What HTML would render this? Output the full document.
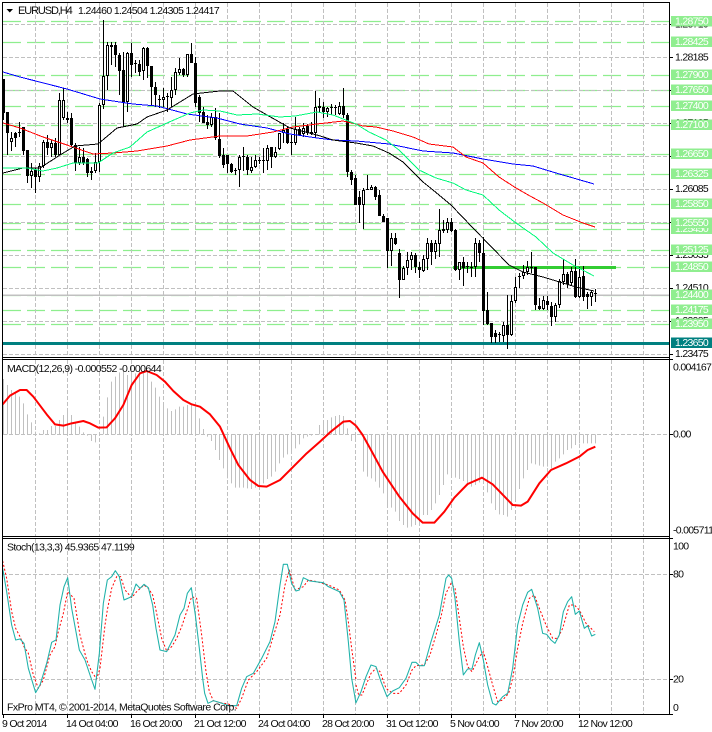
<!DOCTYPE html>
<html><head><meta charset="utf-8"><title>EURUSD H4</title>
<style>
html,body{margin:0;padding:0;background:#fff;width:712px;height:732px;overflow:hidden}
svg{display:block}
text{font-family:"Liberation Sans",sans-serif;font-size:10.5px;fill:#0a0a0a;letter-spacing:-.7px}
.l text{fill:#fff}
</style></head><body>
<svg width="712" height="732" viewBox="0 0 712 732" xmlns="http://www.w3.org/2000/svg">
<rect width="712" height="732" fill="#fff"/>

<!-- green level lines -->
<path fill="none" stroke="#8eee8e" stroke-width="1.25" stroke-dasharray="18 6" d="M3 21.5H669M3 42.5H669M3 75.5H669M3 90.5H669M3 106.5H669M3 125.5H669M3 154.5H669M3 174.5H669M3 204.5H669M3 223.5H669M3 229.5H669M3 250.5H669M3 267.5H669M3 295.5H669M3 310.5H669M3 324.5H669"/>

<!-- grid -->
<path shape-rendering="crispEdges" fill="none" stroke="#c0c0c0" stroke-dasharray="4 2" d="M3 24.5H669M3 57.5H669M3 90.5H669M3 123.5H669M3 156.5H669M3 189.5H669M3 222.5H669M3 255.5H669M3 288.5H669M3 321.5H669M3 354.5H669
M35.5 3V357M67.5 3V357M99.5 3V357M131.5 3V357M163.5 3V357M195.5 3V357M227.5 3V357M259.5 3V357M291.5 3V357M323.5 3V357M355.5 3V357M387.5 3V357M419.5 3V357M451.5 3V357M483.5 3V357M515.5 3V357M547.5 3V357M579.5 3V357M611.5 3V357M643.5 3V357
M35.5 360V536M67.5 360V536M99.5 360V536M131.5 360V536M163.5 360V536M195.5 360V536M227.5 360V536M259.5 360V536M291.5 360V536M323.5 360V536M355.5 360V536M387.5 360V536M419.5 360V536M451.5 360V536M483.5 360V536M515.5 360V536M547.5 360V536M579.5 360V536M611.5 360V536M643.5 360V536
M3 434.5H669
M35.5 539V714M67.5 539V714M99.5 539V714M131.5 539V714M163.5 539V714M195.5 539V714M227.5 539V714M259.5 539V714M291.5 539V714M323.5 539V714M355.5 539V714M387.5 539V714M419.5 539V714M451.5 539V714M483.5 539V714M515.5 539V714M547.5 539V714M579.5 539V714M611.5 539V714M643.5 539V714
M3 574.5H669M3 679.5H669"/>

<!-- bid line, teal level, thick green level -->
<rect x="3" y="294.5" width="666" height="1.5" fill="#c0c0c0"/>
<rect x="3" y="342" width="666" height="3" fill="#008080"/>
<rect x="453" y="266" width="163" height="3" fill="#32cd32"/>

<!-- candles -->
<path shape-rendering="crispEdges" fill="none" stroke="#000" d="M3.5 79V120M7.5 112V155M11.5 132V151M15.5 132V147M19.5 122V137M23.5 127V155M27.5 150V183M31.5 163V188M35.5 168V193M39.5 163V182M43.5 140V168M47.5 135V155M51.5 140V157M55.5 138V157M59.5 93V155M63.5 88V120M67.5 112V123M71.5 113V147M75.5 143V171M79.5 147V165M83.5 148V165M87.5 158V177M91.5 167V180M95.5 153V173M99.5 103V172M103.5 20V109M107.5 42V90M111.5 42V65M115.5 42V67M119.5 53V95M123.5 52V127M127.5 52V112M131.5 43V77M135.5 60V73M139.5 60V76M143.5 47V80M147.5 47V78M151.5 66V105M155.5 82V107M159.5 95V108M163.5 88V107M167.5 93V112M171.5 77V107M175.5 68V95M179.5 58V75M183.5 68V77M187.5 54V77M191.5 43V63M195.5 57V107M199.5 95V122M203.5 107V123M207.5 115V129M211.5 113V127M215.5 108V140M219.5 113V158M223.5 148V168M227.5 155V173M231.5 163V173M235.5 168V175M239.5 155V187M243.5 147V171M247.5 155V175M251.5 157V173M255.5 155V168M259.5 157V164M263.5 148V173M267.5 145V170M271.5 147V168M275.5 147V158M279.5 133V150M283.5 123V143M287.5 127V144M291.5 135V155M295.5 117V145M299.5 127V136M303.5 123V137M307.5 124V135M311.5 122V135M315.5 91V138M319.5 98V113M323.5 102V118M327.5 107V117M331.5 104V115M335.5 105V115M339.5 102V115M343.5 88V118M347.5 113V177M351.5 170V185M355.5 175V205M359.5 191V223M363.5 188V229M367.5 175V190M371.5 185V190M375.5 186V200M379.5 190V216M383.5 214V222M387.5 218V268M391.5 233V266M395.5 233V245M399.5 249V298M403.5 266V280M407.5 252V275M411.5 252V270M415.5 253V273M419.5 262V278M423.5 255V272M427.5 238V270M431.5 240V265M435.5 240V259M439.5 209V257M443.5 220V233M447.5 218V233M451.5 218V232M455.5 229V271M459.5 262V280M463.5 257V286M467.5 262V273M471.5 262V277M475.5 238V277M479.5 240V262M483.5 237V325M487.5 292V325M491.5 323V343M495.5 330V343M499.5 332V342M503.5 322V342M507.5 295V349M511.5 295V336M515.5 277V303M519.5 273V288M523.5 265V279M527.5 261V275M531.5 252V273M535.5 267V310M539.5 298V310M543.5 296V310M547.5 296V310M551.5 302V326M555.5 303V322M559.5 279V308M563.5 259V285M567.5 272V288M571.5 267V285M575.5 259V298M579.5 267V298M583.5 266V301M587.5 292V309M591.5 290V306M595.5 289V302"/>
<path shape-rendering="crispEdges" fill="none" stroke="#000" stroke-width="3" d="M3.5 79V113M7.5 112V133M11.5 138V142M15.5 133V138M19.5 132V133M23.5 127V151M27.5 150V176M31.5 171V176M35.5 170V177M39.5 166V177M43.5 142V166M47.5 142V148M51.5 143V148M55.5 143V155M59.5 100V155M63.5 100V118M67.5 118V120M71.5 118V145M75.5 145V163M79.5 157V163M83.5 157V163M87.5 159V173M91.5 171V173M95.5 162V171M99.5 105V162M103.5 76V105M107.5 45V76M111.5 45V47M115.5 45V55M119.5 55V71M123.5 70V102M127.5 53V102M131.5 53V65M135.5 63V64M139.5 64V72M143.5 48V71M147.5 48V66M151.5 66V87M155.5 87V95M159.5 99V100M163.5 97V100M167.5 96V97M171.5 90V98M175.5 72V90M179.5 69V73M183.5 69V75M187.5 54V75M191.5 54V63M195.5 63V103M199.5 97V113M203.5 112V123M207.5 122V125M211.5 117V125M215.5 117V138M219.5 139V156M223.5 155V165M227.5 155V164M231.5 164V172M235.5 170V171M239.5 157V170M243.5 156V157M247.5 157V170M251.5 167V171M255.5 160V167M259.5 160V161M263.5 160V161M267.5 148V161M271.5 147V157M275.5 152V157M279.5 133V149M283.5 130V133M287.5 129V143M291.5 142V143M295.5 129V143M299.5 129V135M303.5 128V134M307.5 126V133M311.5 132V134M315.5 107V133M319.5 106V108M323.5 107V112M327.5 108V112M331.5 107V108M335.5 107V108M339.5 106V114M343.5 106V115M347.5 115V172M351.5 172V180M355.5 178V205M359.5 197V205M363.5 190V205M367.5 189V190M371.5 187V190M375.5 187V197M379.5 195V216M383.5 216V222M387.5 218V251M391.5 238V251M395.5 238V244M399.5 253V280M403.5 268V280M407.5 260V268M411.5 255V260M415.5 255V267M419.5 267V270M423.5 259V271M427.5 243V259M431.5 243V252M435.5 243V252M439.5 230V244M443.5 229V231M447.5 222V230M451.5 222V231M455.5 230V270M459.5 262V270M463.5 262V268M467.5 266V267M471.5 267V268M475.5 243V267M479.5 243V253M483.5 253V311M487.5 310V324M491.5 323V337M495.5 333V337M499.5 334V335M503.5 325V336M507.5 325V335M511.5 301V335M515.5 287V301M519.5 276V277M523.5 272V276M527.5 267V272M531.5 267V268M535.5 267V305M539.5 306V309M543.5 300V309M547.5 301V305M551.5 306V317M555.5 305V317M559.5 281V305M563.5 274V282M567.5 274V284M571.5 271V283M575.5 271V297M579.5 277V297M583.5 276V297M587.5 294V297M591.5 292V297M595.5 293V294"/>
<path shape-rendering="crispEdges" fill="none" stroke="#fff" d="M11.5 139V141M31.5 172V175M39.5 167V176M43.5 143V165M51.5 144V147M59.5 101V154M63.5 101V117M79.5 158V162M95.5 163V170M99.5 106V161M103.5 77V104M107.5 46V75M127.5 54V101M143.5 49V70M163.5 98V99M171.5 91V97M175.5 73V89M179.5 70V72M187.5 55V74M211.5 118V124M239.5 158V169M251.5 168V170M255.5 161V166M267.5 149V160M275.5 153V156M279.5 134V148M283.5 131V132M295.5 130V142M303.5 129V133M315.5 108V132M327.5 109V111M339.5 107V113M363.5 191V204M371.5 188V189M391.5 239V250M403.5 269V279M407.5 261V267M411.5 256V259M423.5 260V270M427.5 244V258M435.5 244V251M439.5 231V243M447.5 223V229M459.5 263V269M475.5 244V266M503.5 326V335M511.5 302V334M515.5 288V300M523.5 273V275M527.5 268V271M543.5 301V308M555.5 306V316M559.5 282V304M563.5 275V281M571.5 272V282M579.5 278V296M591.5 293V296"/>

<!-- moving averages -->
<g fill="none" stroke-linejoin="round" shape-rendering="crispEdges">
<polyline stroke="#0000ff" stroke-width="1" points="3,72 20,77 67,89 100,99 133,104 157,106 187,114 217,118 240,124 267,128 290,134 317,138 333,140 356,141 389,144 423,151 453,153 483,159 513,164 533,166 556,173 594,184"/>
<polyline stroke="#ff0000" stroke-width="1" points="3,123 20,128 43,137 67,145 93,154 113,153 137,151 167,146 190,140 220,136 247,136 273,132 293,127 317,124 343,121 356,124 363,126 376,127 393,131 413,137 429,144 453,147 466,157 483,163 499,177 516,188 530,196 543,203 563,215 583,223 595,227"/>
<polyline stroke="#000000" stroke-width="1" points="3,173 23,168 40,168 60,155 75,146 98,144 117,128 137,124 147,117 167,110 193,94 220,91 233,91 253,107 267,115 290,128 317,135 333,140 356,143 373,146 389,153 403,162 423,182 433,190 451,205 473,228 509,265 523,272 543,277 563,283 576,287 594,291"/>
<polyline stroke="#00fa7a" stroke-width="1" points="3,168 27,168 43,171 57,168 73,163 98,163 113,153 130,147 147,132 167,123 190,113 203,110 220,111 237,115 257,114 280,117 295,116 317,112 333,115 356,124 369,132 386,140 399,150 419,170 436,178 453,183 466,190 483,195 499,210 516,223 536,237 553,253 573,265 594,276"/>
</g>

<!-- MACD histogram -->
<g transform="translate(0,355) scale(.33333)" fill="none" stroke="#c0c0c0" stroke-width="3">
<path d="M10.5 238V72M22.5 238V90M34.5 238V105M46.5 238V110M58.5 238V125M70.5 238V145M82.5 238V178M94.5 238V202M106.5 238V230M118.5 238V235M130.5 238V225M142.5 238V225M154.5 238V213M166.5 238V213M178.5 238V195M190.5 238V180M202.5 238V165M214.5 238V180M226.5 238V205M238.5 238V215M250.5 238V232M262.5 238V242M274.5 238V258M286.5 238V262M298.5 238V240M310.5 238V185M322.5 238V127M334.5 238V80M346.5 238V65M358.5 238V52M370.5 238V50M382.5 238V60M394.5 238V60M406.5 238V55M418.5 238V48M430.5 238V48M442.5 238V50M454.5 238V80M466.5 238V98M478.5 238V125M490.5 238V145M502.5 238V160M514.5 238V168M526.5 238V163M538.5 238V155M550.5 238V155M562.5 238V150M574.5 238V150M586.5 238V155M598.5 238V190M610.5 238V222M622.5 238V245M634.5 238V258M646.5 238V285M658.5 238V315M670.5 238V340M682.5 238V370M694.5 238V385M706.5 238V398M718.5 238V398M730.5 238V398M742.5 238V400M754.5 238V402M766.5 238V398M778.5 238V395M790.5 238V385M802.5 238V372M814.5 238V365M826.5 238V350M838.5 238V325M850.5 238V308M862.5 238V298M874.5 238V285M886.5 238V280M898.5 238V268M910.5 238V250M922.5 238V245M934.5 238V242M958.5 238V210M970.5 238V205M982.5 238V195M994.5 238V187M1006.5 238V183M1018.5 238V180M1030.5 238V183M1042.5 238V220M1054.5 238V258M1066.5 238V260"/>
</g>
<g transform="translate(356,355) scale(.33333)" fill="none" stroke="#c0c0c0" stroke-width="3">
<path d="M10.5 238V240M22.5 238V350M34.5 238V365M46.5 238V370M58.5 238V380M70.5 238V398M82.5 238V415M94.5 238V450M106.5 238V458M118.5 238V470M130.5 238V498M142.5 238V510M154.5 238V518M166.5 238V515M178.5 238V510M190.5 238V505M202.5 238V480M214.5 238V480M226.5 238V465M238.5 238V445M250.5 238V420M262.5 238V390M274.5 238V358M286.5 238V368M298.5 238V368M310.5 238V372M322.5 238V378M334.5 238V385M346.5 238V395M358.5 238V390M370.5 238V382M382.5 238V385M394.5 238V412M406.5 238V445M418.5 238V465M430.5 238V478M442.5 238V480M454.5 238V485M466.5 238V465M478.5 238V430M490.5 238V402M502.5 238V370M514.5 238V345M526.5 238V325M538.5 238V328M550.5 238V332M562.5 238V335M574.5 238V335M586.5 238V340M598.5 238V320M610.5 238V310M622.5 238V298M634.5 238V285M646.5 238V280M658.5 238V270M670.5 238V265M682.5 238V265M694.5 238V265M706.5 238V265M718.5 238V265"/>
</g>
<!-- MACD signal -->
<g transform="translate(0,355) scale(.33333)" fill="none" stroke="#ff0000" stroke-width="6" stroke-linejoin="round">
<polyline points="8,148 30,122 60,105 80,105 100,125 140,178 165,208 190,212 215,205 250,198 270,205 295,218 320,217 345,190 370,150 395,90 420,55 440,48 470,60 495,80 520,108 550,135 575,148 600,155 630,178 660,215 690,280 715,330 750,375 775,393 800,395 840,375 880,335 920,295 960,260 990,232 1030,200 1050,198 1068,212"/>
</g>
<g transform="translate(356,355) scale(.33333)" fill="none" stroke="#ff0000" stroke-width="6" stroke-linejoin="round">
<polyline points="0,212 20,240 45,285 80,350 130,425 170,475 200,503 235,503 265,470 295,428 335,387 378,368 410,388 470,450 495,452 515,440 550,385 585,345 630,325 670,305 695,285 718,275"/>
</g>

<!-- Stochastic -->
<g transform="translate(0,535) scale(.33333)" fill="none" stroke-linejoin="round" stroke-width="3">
<polyline stroke="#ff0000" stroke-dasharray="6 6" points="8,78 20,130 35,230 47,280 60,305 72,335 85,355 100,420 115,460 130,435 150,360 165,335 175,290 190,235 203,170 222,190 240,300 260,375 275,410 290,432 300,400 315,270 322,225 335,160 350,125 362,125 375,165 395,188 410,170 432,150 445,160 458,180 470,235 485,310 500,348 515,335 530,310 545,275 560,230 575,185 590,190 605,300 618,410 628,470 640,497 660,503 685,507 710,520 725,490 745,435 770,410 800,370 815,320 840,240 855,150 868,105 885,165 910,155 925,135 950,140 985,150 1018,165 1035,195 1045,260 1055,340 1068,435"/>
<polyline stroke="#20b2aa" stroke-width="3.2" points="8,100 20,170 35,270 47,315 60,312 72,325 85,400 107,473 120,450 140,385 155,322 168,315 180,210 192,155 203,128 215,220 238,345 255,375 270,420 285,463 298,355 310,205 322,135 335,125 346,107 358,125 372,195 395,185 408,147 420,160 432,148 445,158 458,210 468,280 480,345 500,350 525,300 540,240 552,220 562,175 574,158 586,240 598,340 608,430 614,475 624,505 640,497 660,503 685,512 710,512 725,460 740,425 760,415 785,370 810,320 825,260 840,150 850,88 862,88 875,145 888,168 898,165 910,128 930,138 970,143 985,155 1018,170 1032,195 1045,320 1055,430 1068,505"/>
</g>
<g transform="translate(356,535) scale(.33333)" fill="none" stroke-linejoin="round" stroke-width="3">
<polyline stroke="#ff0000" stroke-dasharray="6 6" points="0,450 8,480 18,480 30,450 45,415 60,400 72,410 90,460 110,475 130,475 150,450 168,405 180,392 205,390 222,360 240,300 255,245 270,175 285,145 297,160 310,250 322,335 335,395 348,410 370,365 382,350 395,395 410,450 425,500 440,495 458,475 470,430 485,340 500,265 520,190 535,180 550,220 570,270 590,310 605,310 620,280 640,210 655,210 670,225 690,265 715,290"/>
<polyline stroke="#20b2aa" stroke-width="3.2" points="0,503 15,470 30,425 45,390 60,395 75,440 93,485 110,468 130,458 150,430 168,382 180,382 190,392 205,392 225,320 250,240 270,130 278,120 287,130 297,190 310,320 322,420 335,402 348,402 358,360 370,323 382,375 395,450 410,505 420,510 440,485 455,475 470,400 485,270 500,210 515,172 527,163 545,220 560,295 572,298 585,315 597,325 610,300 622,230 635,200 647,185 658,238 670,228 685,280 695,272 707,303 718,298"/>
</g>

<!-- borders and ticks -->
<path shape-rendering="crispEdges" fill="none" stroke="#000" d="M2.5 2V715M669.5 2V715M2 2.5H670M2 357.5H670M2 359.5H673M2 536.5H670M2 538.5H673M2 714.5H673
M670 24.5h3M670 57.5h3M670 90.5h3M670 123.5h3M670 156.5h3M670 189.5h3M670 222.5h3M670 255.5h3M670 288.5h3M670 321.5h3M670 354.5h3M670 434.5h3M670 574.5h3M670 679.5h3
M3.5 715v3M67.5 715v3M131.5 715v3M195.5 715v3M259.5 715v3M323.5 715v3M387.5 715v3M451.5 715v3M515.5 715v3M579.5 715v3"/>

<!-- price scale plain labels -->
<text x="675" y="27.5">1.28710</text>
<text x="675" y="60.5">1.28185</text>
<text x="675" y="93">1.27660</text>
<text x="675" y="126">1.27135</text>
<text x="675" y="159">1.26610</text>
<text x="675" y="192">1.26085</text>
<text x="675" y="258">1.25035</text>
<text x="675" y="291">1.24510</text>
<text x="675" y="324">1.23985</text>
<text x="675" y="357">1.23475</text>

<!-- price scale coloured labels -->
<g fill="#90ee90">
<rect x="671" y="16" width="41" height="10.5"/><rect x="671" y="36.5" width="41" height="10.5"/><rect x="671" y="69.5" width="41" height="10.5"/><rect x="671" y="84.5" width="41" height="10.5"/><rect x="671" y="100.5" width="41" height="10.5"/><rect x="671" y="119.5" width="41" height="10.5"/><rect x="671" y="148.5" width="41" height="10.5"/><rect x="671" y="168.5" width="41" height="10.5"/><rect x="671" y="198.5" width="41" height="10.5"/><rect x="671" y="223.5" width="41" height="10.5"/>
</g>
<g class="l"><text x="675" y="232">1.25450</text></g>
<g fill="#90ee90">
<rect x="671" y="217.5" width="41" height="10.5"/><rect x="671" y="244.5" width="41" height="10.5"/><rect x="671" y="261.5" width="41" height="10.5"/><rect x="671" y="289.5" width="41" height="10.5"/><rect x="671" y="304.5" width="41" height="10.5"/><rect x="671" y="318.5" width="41" height="10.5"/>
</g>
<rect x="671" y="337.5" width="41" height="10.5" fill="#008080"/>
<g class="l">
<text x="675" y="24.5">1.28750</text>
<text x="675" y="45">1.28425</text>
<text x="675" y="78">1.27900</text>
<text x="675" y="93">1.27650</text>
<text x="675" y="109">1.27400</text>
<text x="675" y="128">1.27100</text>
<text x="675" y="157">1.26650</text>
<text x="675" y="177">1.26325</text>
<text x="675" y="207">1.25850</text>
<text x="675" y="226">1.25550</text>
<text x="675" y="253">1.25125</text>
<text x="675" y="270">1.24850</text>
<text x="675" y="298">1.24400</text>
<text x="675" y="313">1.24175</text>
<text x="675" y="327">1.23950</text>
<text x="675" y="346">1.23650</text>
</g>

<!-- indicator scales -->
<text x="673" y="370.5">0.004167</text>
<text x="673" y="437.5">0.00</text>
<text x="673" y="533.5">-0.005711</text>
<text x="673" y="549.5">100</text>
<text x="673" y="577.5">80</text>
<text x="673" y="682.5">20</text>
<text x="673" y="711">0</text>

<!-- titles -->
<path d="M6.5 9h6.5l-3.25 3.5z" fill="#000"/>
<text x="18" y="14" textLength="54" style="font-size:11px">EURUSD,H4</text>
<text x="78" y="14" textLength="141">1.24460 1.24504 1.24305 1.24417</text>
<text x="7" y="372" textLength="154">MACD(12,26,9) -0.000552 -0.000644</text>
<text x="7" y="550.5" textLength="127">Stoch(13,3,3) 45.9365 47.1199</text>
<text x="7" y="710.5" textLength="229">FxPro MT4, © 2001-2014, MetaQuotes Software Corp.</text>

<!-- time axis -->
<g style="letter-spacing:-.6px">
<text x="2" y="727">9 Oct 2014</text>
<text x="66" y="727">14 Oct 04:00</text>
<text x="130" y="727">16 Oct 20:00</text>
<text x="194" y="727">21 Oct 12:00</text>
<text x="258" y="727">24 Oct 04:00</text>
<text x="322" y="727">28 Oct 20:00</text>
<text x="386" y="727">31 Oct 12:00</text>
<text x="450" y="727">5 Nov 04:00</text>
<text x="514" y="727">7 Nov 20:00</text>
<text x="578" y="727">12 Nov 12:00</text>
</g>
</svg>
</body></html>
